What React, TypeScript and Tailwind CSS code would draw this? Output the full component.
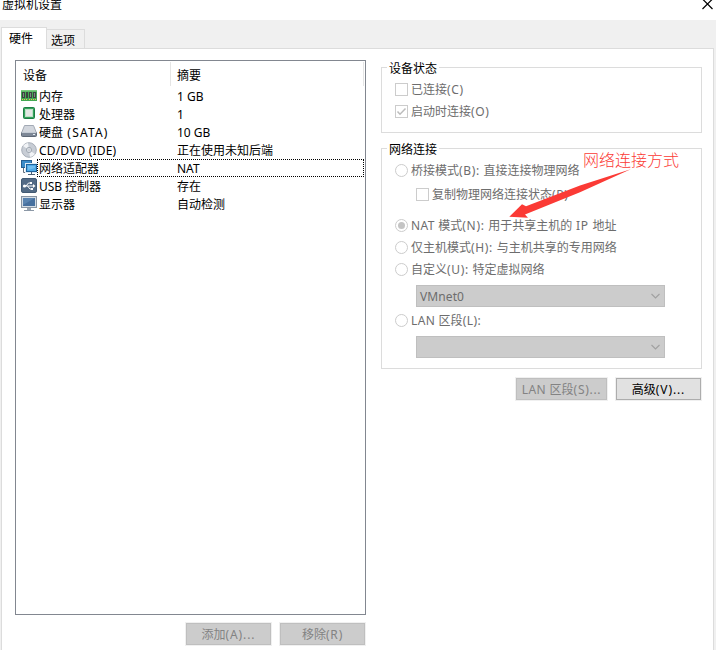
import type { ReactNode } from "react";

function MemoryIcon() {
  return (
    <svg width="16" height="16" viewBox="0 0 16 16">
      <rect x="0" y="2" width="16" height="11" fill="#43a852" />
      <rect x="0" y="2" width="16" height="1.500" fill="#7ccb80" />
      <path d="M1 4h3v6H1zM5 4h2v6H5zM8 4h3v6H8zM12 4h3v6h-3z" fill="#3b4440" />
      <path d="M2 5h1v4H2zM9 5h1v4H9zM13 5h1v4h-1z" fill="#7d8a82" />
      <path d="M1 11.500h6M8 11.500h7" stroke="#e5c558" strokeDasharray="1 1" />
    </svg>
  );
}

function CpuIcon() {
  return (
    <svg width="16" height="16" viewBox="0 0 16 16">
      <rect x="2.500" y="1.500" width="11" height="11" rx="1" fill="#35a15c" stroke="#1d7f43" />
      <rect x="4.500" y="3.500" width="7" height="7" fill="#e4e8e4" stroke="#bde0c5" />
    </svg>
  );
}

function DiskIcon() {
  return (
    <svg width="16" height="16" viewBox="0 0 16 16">
      <path d="M3.500 1.500h9L15.500 9h-15z" fill="#d2d6dd" stroke="#a2a9b4" />
      <rect x="0.500" y="8.500" width="15" height="4" rx="1" fill="#7d8796" stroke="#5d6775" />
      <path d="M1 8.500h14" stroke="#c4cbd4" />
      <path d="M12 10.500h2" stroke="#e5edf5" />
    </svg>
  );
}

function DiscIcon() {
  return (
    <svg width="16" height="16" viewBox="0 0 16 16">
      <circle cx="8" cy="8" r="7.300" fill="#c8cdd5" stroke="#a7aeb8" />
      <path d="M8 8L2 4a7 7 0 0 1 5-3zM8 8l6 4a7 7 0 0 1-5 3z" fill="#f1f3f6" />
      <circle cx="8" cy="8" r="2.600" fill="#e9edf2" stroke="#929aa5" strokeWidth=".8" />
      <circle cx="8" cy="8" r="1.100" fill="#fff" stroke="#8b939e" strokeWidth=".5" />
    </svg>
  );
}

function NetworkIcon() {
  return (
    <svg width="16" height="16" viewBox="0 0 16 16">
      <path d="M2.500 7v5.500H6" fill="none" stroke="#65717f" />
      <rect x="0.500" y="0.500" width="10" height="7" fill="#3b8cc9" stroke="#245f91" />
      <rect x="4.500" y="3.500" width="11" height="9" fill="#fff" stroke="#dcebf6" />
      <rect x="5.500" y="4.500" width="10" height="7" fill="#4ea9e6" stroke="#1f639b" />
      <path d="M7 6h7v2L7 10z" fill="#72bff0" />
      <path d="M10.500 12v2M7 14.500h7" stroke="#4c6075" />
    </svg>
  );
}

function UsbIcon() {
  return (
    <svg width="16" height="16" viewBox="0 0 16 16">
      <rect x="0.500" y="0.500" width="15" height="14" rx="1.500" fill="#536b86" stroke="#425a74" />
      <path d="M3 8h10M5 8l2.500-3H9M6.500 8L9 11h1.500" fill="none" stroke="#fff" />
      <circle cx="3.500" cy="8" r="1.600" fill="#fff" />
      <path d="M12 6l2.500 2L12 10zM9 4h2v2H9zM10 10h2v2h-2z" fill="#fff" />
    </svg>
  );
}

function DisplayIcon() {
  return (
    <svg width="16" height="16" viewBox="0 0 16 16">
      <rect x="0.500" y="0.500" width="15" height="11" fill="#d4dce5" stroke="#8894a2" />
      <rect x="2" y="2" width="12" height="8" fill="#466f9e" />
      <path d="M2 2h12L2 9z" fill="#5983b0" />
      <path d="M6 12h4v2H6z" fill="#9aa5b2" />
      <path d="M3 14.500h10" stroke="#8c98a6" />
    </svg>
  );
}

/** Latin run inside a Chinese label. */
function L({ children, track = "tracking-[0.65px]" }: { children: ReactNode; track?: string }) {
  return <span className={track}>{children}</span>;
}

const devices: { icon: ReactNode; name: ReactNode; summary: string; selected?: boolean }[] = [
  { icon: <MemoryIcon />, name: "内存", summary: "1 GB" },
  { icon: <CpuIcon />, name: "处理器", summary: "1" },
  { icon: <DiskIcon />, name: <>硬盘<L track="tracking-[1.2px]"> (SATA)</L></>, summary: "10 GB" },
  { icon: <DiscIcon />, name: <L track="tracking-[0.18px]">CD/DVD (IDE)</L>, summary: "正在使用未知后端" },
  { icon: <NetworkIcon />, name: "网络适配器", summary: "NAT", selected: true },
  { icon: <UsbIcon />, name: <><L track="tracking-[-0.1px]">USB </L>控制器</>, summary: "存在" },
  { icon: <DisplayIcon />, name: "显示器", summary: "自动检测" },
];

function Check({ checked = false }: { checked?: boolean }) {
  return (
    <span className="flex h-[13px] w-[13px] shrink-0 items-center justify-center border border-[#cccccc] bg-white">
      {checked && (
        <svg width="11" height="11" viewBox="0 0 11 11">
          <path d="M1.500 5.500l2.500 2.700L9.500 2.500" fill="none" stroke="#bcbcbc" strokeWidth="1.500" />
        </svg>
      )}
    </span>
  );
}

function Radio({ checked = false }: { checked?: boolean }) {
  return (
    <span className="flex h-[13px] w-[13px] shrink-0 items-center justify-center rounded-full border border-[#cccccc] bg-white">
      {checked && <span className="h-[7px] w-[7px] rounded-full bg-[#c4c4c4]" />}
    </span>
  );
}

function Option({ control, children }: { control: ReactNode; children: ReactNode }) {
  return (
    <div className="flex h-[22px] items-center gap-[3px] text-[#6d6d6d]">
      {control}
      <span className="pt-[2px]">{children}</span>
    </div>
  );
}

function Combo({ children }: { children?: ReactNode }) {
  return (
    <div className="ml-[21px] flex h-[22px] w-[249px] items-center justify-between border border-[#bfbfbf] bg-[#cccccc] pr-1 pl-[3px] text-[#6d6d6d]">
      <span className="pt-px">{children}</span>
      <svg width="9" height="6" viewBox="0 0 9 6">
        <path d="M0.500 1l4 4 4-4" fill="none" stroke="#a0a0a0" strokeWidth="1.100" />
      </svg>
    </div>
  );
}

function Group({ title, className, children }: { title: string; className: string; children: ReactNode }) {
  return (
    <section className={`w-[321px] border border-[#dcdcdc] pl-[13px] ${className}`}>
      <h2 className="-mt-[9px] -ml-[8px] h-[19px] w-[52px] bg-white px-[2px] leading-[20px] text-black">{title}</h2>
      {children}
    </section>
  );
}

function Button({ width, enabled = false, children }: { width: string; enabled?: boolean; children: ReactNode }) {
  return (
    <button
      className={`${width} h-[22px] border leading-[22px] outline-1 outline-[#f0f0f0] ${
        enabled ? "border-[#adadad] bg-[#e1e1e1] text-black" : "border-[#bfbfbf] bg-[#cccccc] text-[#838383]"
      }`}
    >
      {children}
    </button>
  );
}

function Arrow() {
  return (
    <svg className="absolute top-[165px] left-[505px]" width="130" height="56" viewBox="505 165 130 56">
      <path
        d="M509.300 216.700L522 204.300l4 2L580 185.500 630.700 169.300 580 192.300 525 214.500l3 3.200z"
        fill="#fb3a35"
      />
    </svg>
  );
}

export default function App() {
  return (
    <main className="relative flex h-[650px] w-[716px] flex-col overflow-hidden bg-[#f0f0f0] font-['Noto_Sans','Noto_Sans_CJK_SC',sans-serif] text-[12px] text-black">
      <header className="flex h-5 shrink-0 justify-between bg-white pl-[2px]">
        <h1 className="-mt-[4px] leading-[18px]">虚拟机设置</h1>
        <svg className="mr-[3px]" width="11" height="10" viewBox="0 0 11 10">
          <path d="M0.500-1l10 10M10.500-1l-10 10" stroke="#000" strokeWidth="1.200" />
        </svg>
      </header>

      <nav className="flex h-7 shrink-0 items-end pl-px">
        <span className="z-10 -mb-px h-[22px] w-[46px] border border-b-0 border-[#dcdcdc] bg-white pl-[7px] leading-[21px]">硬件</span>
        <span className="h-[19px] w-[38px] border-t border-r border-[#dcdcdc] pl-[4px] leading-[21px]">选项</span>
      </nav>

      <div className="ml-px flex h-[602px] w-[713px] shrink-0 border border-b-0 border-[#dcdcdc] bg-white pt-[11px] pl-[13px]">
        <div className="w-[351px]">
          <div className="h-[555px] border border-[#828790]">
            <div className="flex h-[26px] pt-px">
              <span className="h-[24px] w-[155px] border-r border-[#e5e5e5] pl-[7px] leading-[27px]">设备</span>
              <span className="h-[24px] w-[193px] border-r border-[#e5e5e5] pl-[6px] leading-[27px]">摘要</span>
            </div>
            {devices.map((d, i) => (
              <div key={i} className="flex h-[18px] items-center pl-[5px]">
                <span className="h-4 w-4">{d.icon}</span>
                <div
                  className={`flex h-[18px] w-[327px] border border-dotted leading-[17px] ${
                    d.selected ? "border-black" : "border-transparent"
                  }`}
                >
                  <span className="w-[139px] pl-px">{d.name}</span>
                  <span>{d.summary}</span>
                </div>
              </div>
            ))}
          </div>
          <div className="mt-2 mr-px flex justify-end gap-[9px]">
            <Button width="w-[85px]">添加<L track="tracking-[0.9px]">(A)...</L></Button>
            <Button width="w-[85px]">移除<L track="tracking-[0.8px]">(R)</L></Button>
          </div>
        </div>

        <div className="ml-[15px] w-[321px] pt-[7px]">
          <Group title="设备状态" className="h-[66px]">
            <Option control={<Check />}>已连接<L>(C)</L></Option>
            <Option control={<Check checked />}>启动时连接<L>(O)</L></Option>
          </Group>

          <Group title="网络连接" className="mt-[15px] h-[221px]">
            <Option control={<Radio />}>桥接模式<L>(B): </L>直接连接物理网络</Option>
            <div className="mt-[2px] ml-[21px]">
              <Option control={<Check />}>复制物理网络连接状态<L>(P)</L></Option>
            </div>
            <div className="mt-[9px]">
              <Option control={<Radio checked />}><L track="tracking-[0.4px]">NAT </L>模式<L>(N): </L>用于共享主机的<L> IP </L>地址</Option>
              <Option control={<Radio />}>仅主机模式<L>(H): </L>与主机共享的专用网络</Option>
              <Option control={<Radio />}>自定义<L>(U): </L>特定虚拟网络</Option>
            </div>
            <div className="mt-[5px]"><Combo><L track="tracking-[0.1px]">VMnet0</L></Combo></div>
            <div className="mt-[2px]"><Option control={<Radio />}><L track="tracking-[0.35px]">LAN </L>区段<L track="tracking-[0.5px]">(L):</L></Option></div>
            <div className="mt-[5px]"><Combo /></div>
          </Group>

          <div className="mt-[9px] mr-px flex justify-end gap-[9px]">
            <Button width="w-[91px]"><L track="tracking-[0.4px]">LAN </L>区段<L track="tracking-[0.7px]">(S)...</L></Button>
            <Button width="w-[85px]" enabled>高级<L track="tracking-[0.9px]">(V)...</L></Button>
          </div>
        </div>
      </div>

      <Arrow />
      <p className="absolute top-[149px] left-[583px] text-[16px] leading-[22px] font-light text-[#fb3a35]">网络连接方式</p>
    </main>
  );
}
